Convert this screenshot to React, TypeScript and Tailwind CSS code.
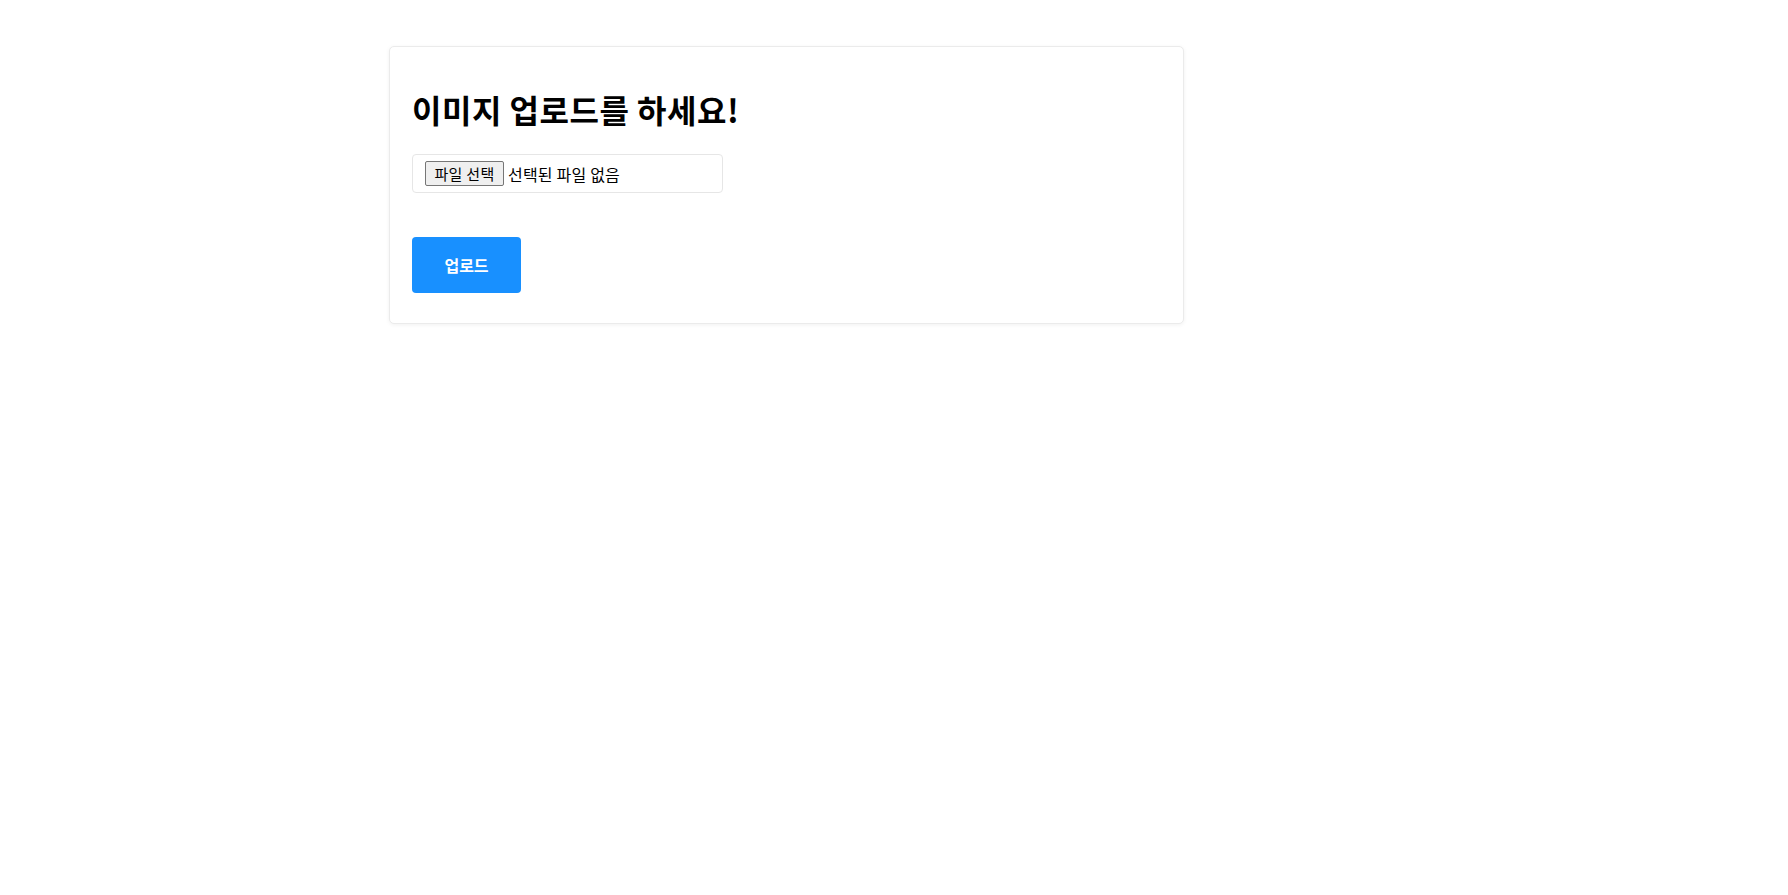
import { useRef, useState } from "react";

export default function App() {
  const [file, setFile] = useState<File | null>(null);
  const inputRef = useRef<HTMLInputElement>(null);

  return (
    <div className="min-h-screen bg-white font-['Noto_Sans_CJK_KR','Noto_Sans',sans-serif] text-black">
      <div className="pt-[46px] pl-[389px]">
        <div className="w-[795px] h-[278px] rounded-[5px] border border-[#ebebeb] bg-white px-[22px] shadow-[0_1px_4px_rgba(0,0,0,0.06)]">
          <h1 className="mt-[42px] text-[32px] font-bold leading-[40px] tracking-[0.5px]">
            이미지 업로드를 하세요!
          </h1>
          <div className="mt-[25px] w-[311px] h-[39px] flex items-center rounded-[4px] border border-[#e6e6e6] px-3">
            <input
              ref={inputRef}
              type="file"
              className="hidden"
              onChange={(e) => setFile(e.target.files?.[0] ?? null)}
            />
            <button
              type="button"
              onClick={() => inputRef.current?.click()}
              className="w-[79px] h-[25px] rounded-[2px] border border-[#767676] bg-[#efefef] text-[15px] leading-none tracking-[0.3px] text-black"
            >
              파일 선택
            </button>
            <span className="ml-1 text-[16px] tracking-[0.2px] text-black">
              {file ? file.name : "선택된 파일 없음"}
            </span>
          </div>
          <button
            type="button"
            className="mt-[44px] w-[109px] h-[56px] rounded-[4px] bg-[#1890ff] text-white text-[16px] font-semibold"
          >
            업로드
          </button>
        </div>
      </div>
    </div>
  );
}
